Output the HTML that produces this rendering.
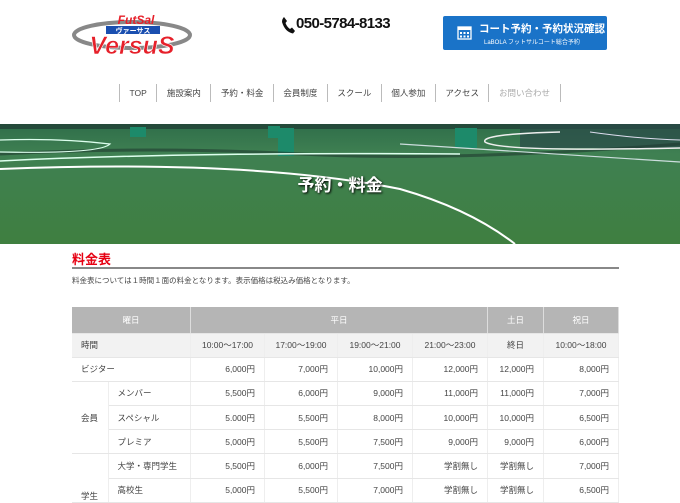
<!DOCTYPE html>
<html><head><meta charset="utf-8"><style>
*{margin:0;padding:0;box-sizing:border-box}
body{width:680px;height:480px;overflow:hidden;background:#fff;font-family:"Liberation Sans","Noto Sans CJK JP",sans-serif;color:#333;position:relative}
.abs{position:absolute}
.nav{position:absolute;top:84px;left:119px;height:18px;display:flex;font-size:8.5px;color:#444}
.nav div{border-left:1px solid #bbb;padding:0 9.5px;line-height:18px}
.nav div:last-child{border-right:1px solid #bbb;color:#aaa}
table{position:absolute;left:72px;top:307px;width:547px;border-collapse:collapse;font-size:8.5px;color:#444}
td,th{height:24.2px;border-bottom:1px solid #e6e6e6;border-right:1px solid #eee;padding:0 9px}
th{background:#b5b5b5;color:#fff;font-weight:normal;height:26px;border-right:1px solid #ddd}
tr.t td{background:#f2f2f2;text-align:center}
td.r{text-align:right}
</style></head><body>
<svg class="abs" style="left:70px;top:10px" width="130" height="46" viewBox="0 0 130 46">
<ellipse cx="62" cy="25" rx="58" ry="13" fill="none" stroke="#888" stroke-width="4"/>
<rect x="36" y="16" width="54" height="8" fill="#1a4fb0"/>
<text x="63" y="23" font-size="7" fill="#fff" text-anchor="middle" font-family="Noto Sans CJK JP" font-weight="bold">ヴァーサス</text>
<text x="66" y="14" font-size="12" fill="#e6202a" text-anchor="middle" font-weight="bold" font-style="italic">FutSal</text>
<text x="62" y="44" font-size="25" fill="#e6202a" text-anchor="middle" font-weight="bold" font-style="italic" stroke="#fff" stroke-width="0.6">VersuS</text>
</svg>
<svg class="abs" style="left:281px;top:16px" width="14" height="18" viewBox="0 0 14 18"><path d="M3 1 L6 5 L4.5 7 Q6 11 9 13 L11 11.5 L14 15 L12 17.5 Q4 16 1 6 Q1 3 3 1Z" fill="#111"/></svg>
<div class="abs" style="left:296px;top:15px;font-size:15px;color:#111;letter-spacing:-0.6px;font-weight:bold">050-5784-8133</div>
<div class="abs" style="left:443px;top:16px;width:164px;height:34px;background:#1a73c8;border-radius:2px;color:#fff">
<svg class="abs" style="left:14px;top:9px" width="15" height="15" viewBox="0 0 15 15"><rect x="1" y="2" width="13" height="12" fill="none" stroke="#fff" stroke-width="1.3"/><rect x="1" y="2" width="13" height="3" fill="#fff"/><g fill="#fff"><rect x="3" y="7" width="2" height="2"/><rect x="6.5" y="7" width="2" height="2"/><rect x="10" y="7" width="2" height="2"/><rect x="3" y="10.5" width="2" height="2"/><rect x="6.5" y="10.5" width="2" height="2"/><rect x="10" y="10.5" width="2" height="2"/></g></svg>
<div class="abs" style="left:36px;top:5px;font-size:10.5px;font-weight:bold;white-space:nowrap">コート予約・予約状況確認</div>
<div class="abs" style="left:41px;top:21px;font-size:6px;white-space:nowrap">LaBOLA フットサルコート総合予約</div>
</div>
<div class="nav"><div>TOP</div><div>施設案内</div><div>予約・料金</div><div>会員制度</div><div>スクール</div><div>個人参加</div><div>アクセス</div><div>お問い合わせ</div></div>
<svg class="abs" style="left:0;top:124px" width="680" height="120" viewBox="0 0 680 120">
<defs><linearGradient id="g" x1="0" y1="0" x2="0" y2="1"><stop offset="0" stop-color="#2f6e4a"/><stop offset="0.25" stop-color="#3f8052"/><stop offset="1" stop-color="#3f7f40"/></linearGradient></defs>
<rect width="680" height="120" fill="url(#g)"/>
<rect width="680" height="5" fill="#244a3a"/>
<rect x="130" y="3" width="16" height="10" fill="#1d8a6a"/><rect x="278" y="4" width="16" height="28" fill="#1d8a6a"/><rect x="455" y="4" width="22" height="20" fill="#1d8a6a"/><rect x="268" y="2" width="12" height="12" fill="#1d8a6a"/>
<rect x="520" y="0" width="160" height="24" fill="#2b4a48" opacity=".7"/>
<path d="M0 30 Q150 22 300 30 T680 20" stroke="#1f3b30" stroke-width="3" fill="none" opacity=".6"/>
<path d="M0 37 Q180 28 460 30" stroke="#dfe" stroke-width="1.5" fill="none"/>
<path d="M0 16 Q60 14 110 20 Q100 30 0 28" stroke="#dfe" stroke-width="1.2" fill="none"/>
<path d="M0 45 Q250 35 400 65 Q470 85 515 120" stroke="#fff" stroke-width="2" fill="none"/>
<path d="M560 8 Q480 10 485 18 Q500 28 680 24" stroke="#eee" stroke-width="1.5" fill="none"/>
<path d="M400 20 Q550 30 680 38" stroke="#cdd" stroke-width="1.2" fill="none"/>
<path d="M590 8 Q640 15 680 16" stroke="#dde" stroke-width="1" fill="none"/>
</svg>
<div class="abs" style="left:0;top:171px;width:680px;text-align:center;color:#fff;font-size:17px;font-weight:bold;text-shadow:1px 1px 2px #000">予約・料金</div>
<div class="abs" style="left:72px;top:249px;color:#e60012;font-size:13px;font-weight:bold">料金表</div>
<div class="abs" style="left:72px;top:267px;width:547px;height:2px;background:#888"></div>
<div class="abs" style="left:72px;top:275px;font-size:7.5px;color:#444">料金表については１時間１面の料金となります。表示価格は税込み価格となります。</div>
<table>
<tr><th colspan="2" style="width:119px">曜日</th><th colspan="4">平日</th><th style="width:56px">土日</th><th style="width:75px">祝日</th></tr>
<tr class="t"><td colspan="2" style="text-align:left">時間</td><td style="width:74px">10:00〜17:00</td><td style="width:73px">17:00〜19:00</td><td style="width:75px">19:00〜21:00</td><td style="width:75px">21:00〜23:00</td><td>終日</td><td>10:00〜18:00</td></tr>
<tr><td colspan="2">ビジター</td><td class="r">6,000円</td><td class="r">7,000円</td><td class="r">10,000円</td><td class="r">12,000円</td><td class="r">12,000円</td><td class="r">8,000円</td></tr>
<tr><td rowspan="3" style="width:36px">会員</td><td>メンバー</td><td class="r">5,500円</td><td class="r">6,000円</td><td class="r">9,000円</td><td class="r">11,000円</td><td class="r">11,000円</td><td class="r">7,000円</td></tr>
<tr><td>スペシャル</td><td class="r">5.000円</td><td class="r">5,500円</td><td class="r">8,000円</td><td class="r">10,000円</td><td class="r">10,000円</td><td class="r">6,500円</td></tr>
<tr><td>プレミア</td><td class="r">5,000円</td><td class="r">5,500円</td><td class="r">7,500円</td><td class="r">9,000円</td><td class="r">9,000円</td><td class="r">6,000円</td></tr>
<tr><td rowspan="2" style="vertical-align:bottom">学生</td><td>大学・専門学生</td><td class="r">5,500円</td><td class="r">6,000円</td><td class="r">7,500円</td><td class="r">学割無し</td><td class="r">学割無し</td><td class="r">7,000円</td></tr>
<tr><td>高校生</td><td class="r">5,000円</td><td class="r">5,500円</td><td class="r">7,000円</td><td class="r">学割無し</td><td class="r">学割無し</td><td class="r">6,500円</td></tr>
</table>
</body></html>
